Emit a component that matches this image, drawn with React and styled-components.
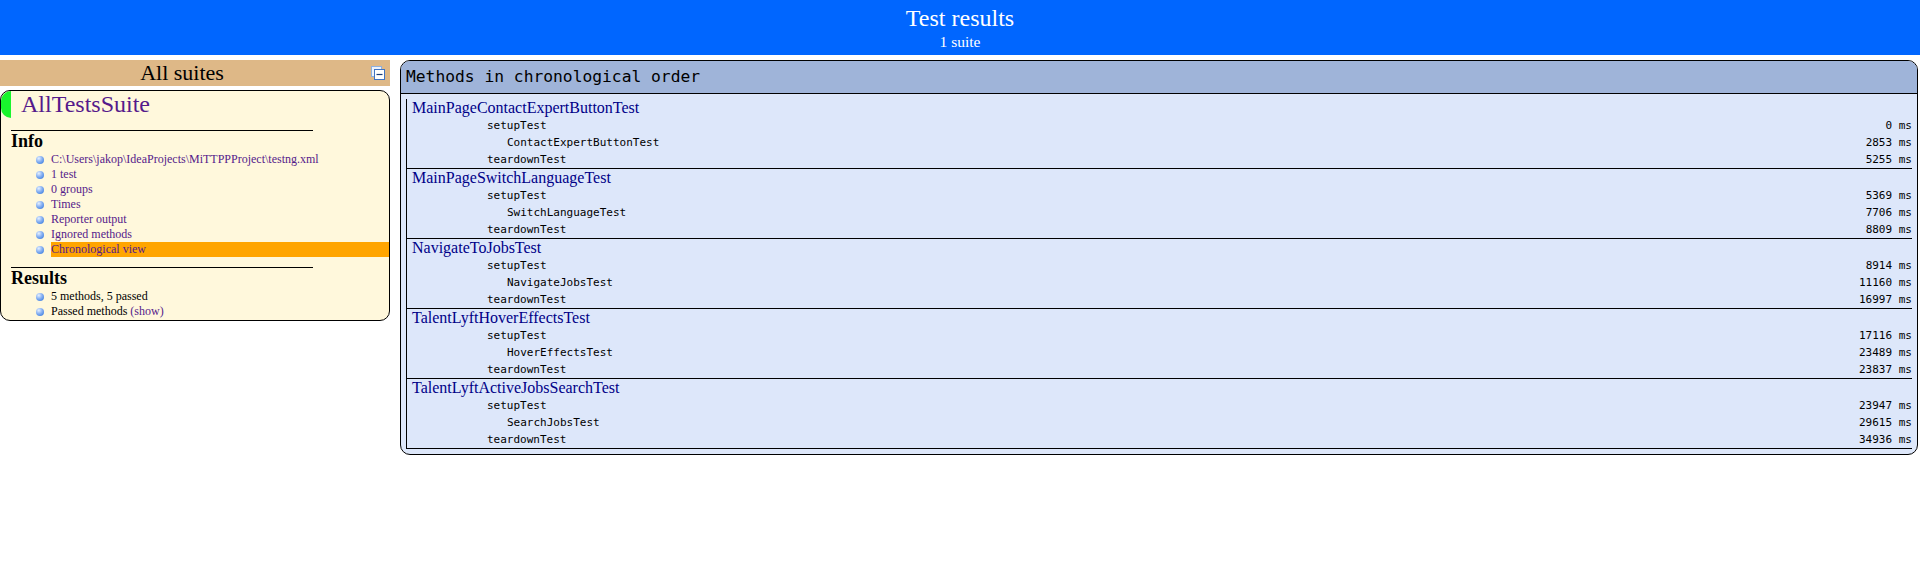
import React from "react";
import styled, { createGlobalStyle } from "styled-components";

const suite = {
  name: "AllTestsSuite",
  info: [
    { label: "C:\\Users\\jakop\\IdeaProjects\\MiTTPPProject\\testng.xml" },
    { label: "1 test" },
    { label: "0 groups" },
    { label: "Times" },
    { label: "Reporter output" },
    { label: "Ignored methods" },
    { label: "Chronological view", selected: true },
  ],
};

const chronology = [
  {
    name: "MainPageContactExpertButtonTest",
    methods: [
      { kind: "config", name: "setupTest", time: 0 },
      { kind: "test", name: "ContactExpertButtonTest", time: 2853 },
      { kind: "config", name: "teardownTest", time: 5255 },
    ],
  },
  {
    name: "MainPageSwitchLanguageTest",
    methods: [
      { kind: "config", name: "setupTest", time: 5369 },
      { kind: "test", name: "SwitchLanguageTest", time: 7706 },
      { kind: "config", name: "teardownTest", time: 8809 },
    ],
  },
  {
    name: "NavigateToJobsTest",
    methods: [
      { kind: "config", name: "setupTest", time: 8914 },
      { kind: "test", name: "NavigateJobsTest", time: 11160 },
      { kind: "config", name: "teardownTest", time: 16997 },
    ],
  },
  {
    name: "TalentLyftHoverEffectsTest",
    methods: [
      { kind: "config", name: "setupTest", time: 17116 },
      { kind: "test", name: "HoverEffectsTest", time: 23489 },
      { kind: "config", name: "teardownTest", time: 23837 },
    ],
  },
  {
    name: "TalentLyftActiveJobsSearchTest",
    methods: [
      { kind: "config", name: "setupTest", time: 23947 },
      { kind: "test", name: "SearchJobsTest", time: 29615 },
      { kind: "config", name: "teardownTest", time: 34936 },
    ],
  },
];

function CollapseIcon() {
  return (
    <svg width="14" height="14" viewBox="0 0 14 14">
      <rect x="0.5" y="0.5" width="10" height="10" fill="#eef3fb" stroke="#8fb0de" />
      <rect x="3.5" y="3.5" width="10" height="10" fill="#ffffff" stroke="#3f74c4" />
      <line x1="5.5" y1="8.5" x2="11.5" y2="8.5" stroke="#1c3d78" strokeWidth="1.2" />
    </svg>
  );
}

function App() {
  return (
    <>
      <GlobalStyle />
      <Banner>
        <BannerTitle>Test results</BannerTitle>
        <BannerSub>1 suite</BannerSub>
      </Banner>

      <Body>
        <Navigator>
          <SuitesHeader>
            All suites
            <CollapseButton>
              <CollapseIcon />
            </CollapseButton>
          </SuitesHeader>

          <SuiteBox>
            <SuiteName>{suite.name}</SuiteName>
            <SuiteContent>
              <SectionTitle>Info</SectionTitle>
              <ItemList>
                {suite.info.map((item) => (
                  <Item key={item.label}>
                    <Bullet />
                    <ItemText $selected={item.selected}>
                      <NavLink>{item.label}</NavLink>
                    </ItemText>
                  </Item>
                ))}
              </ItemList>

              <SectionTitle>Results</SectionTitle>
              <ItemList>
                <Item>
                  <Bullet />
                  <ItemText>5 methods, 5 passed</ItemText>
                </Item>
                <Item>
                  <Bullet />
                  <ItemText>
                    Passed methods <NavLink>(show)</NavLink>
                  </ItemText>
                </Item>
              </ItemList>
            </SuiteContent>
          </SuiteBox>
        </Navigator>

        <MainPanel>
          <PanelHeader>Methods in chronological order</PanelHeader>
          <PanelContent>
            {chronology.map((cls) => (
              <ClassBlock key={cls.name}>
                <ClassName>{cls.name}</ClassName>
                {cls.methods.map((m) => (
                  <MethodRow key={m.name} $test={m.kind === "test"}>
                    <span>{m.name}</span>
                    <MethodTime>{m.time} ms</MethodTime>
                  </MethodRow>
                ))}
              </ClassBlock>
            ))}
          </PanelContent>
        </MainPanel>
      </Body>
    </>
  );
}

const GlobalStyle = createGlobalStyle`
  html, body {
    margin: 0;
    padding: 0;
    background: #fff;
  }
  body {
    font-family: "Liberation Serif", "Times New Roman", serif;
    color: #000;
  }
`;

const Banner = styled.div`
  height: 45px;
  padding: 5px;
  background: #0066ff;
  color: #fff;
  text-align: center;
`;

const BannerTitle = styled.div`
  font-size: 24px;
  line-height: 27px;
`;

const BannerSub = styled.div`
  font-size: 15.5px;
  line-height: 19px;
`;

const Body = styled.div`
  display: flex;
  align-items: flex-start;
  margin-top: 5px;
`;

const Navigator = styled.div`
  flex: none;
  width: 400px;
`;

const SuitesHeader = styled.div`
  display: flex;
  align-items: center;
  justify-content: center;
  position: relative;
  margin: 0 10px 4px 0;
  padding-right: 26px;
  height: 26px;
  line-height: 26px;
  font-size: 22px;
  background: #deb887;
`;

const CollapseButton = styled.span`
  position: absolute;
  right: 5px;
  top: 6px;
  display: flex;
`;

const SuiteBox = styled.div`
  margin-right: 10px;
  padding-bottom: 1px;
  background: #fff8dc;
  border: 1px solid #000;
  border-radius: 10px;
`;

const SuiteName = styled.div`
  display: flex;
  align-items: center;
  height: 27px;
  padding-left: 10px;
  border-left: 10px solid #19f52d;
  border-radius: 10px 0 0 10px;
  font-size: 24px;
  color: #551a8b;
`;

const SuiteContent = styled.div`
  margin-left: 10px;
`;

const SectionTitle = styled.div`
  width: 80%;
  margin-top: 12px;
  border-top: 1px solid #000;
  font-size: 18px;
  font-weight: bold;
  line-height: 21px;

  ul + & {
    margin-top: 10px;
  }
`;

const ItemList = styled.ul`
  list-style: none;
  margin: 0;
  padding: 0;
`;

const Item = styled.li`
  display: flex;
  align-items: center;
  height: 15px;
  font-size: 12px;
  line-height: 15px;
`;

const Bullet = styled.span`
  flex: none;
  width: 8px;
  height: 8px;
  margin: 0 7px 0 25px;
  border-radius: 50%;
  background: radial-gradient(circle at 35% 30%, #e6f0ff 0%, #8fb6f4 40%, #3f7fe0 85%, #2f66c4 100%);
`;

const ItemText = styled.span`
  flex: 1;
  background: ${(p) => (p.$selected ? "#ffa500" : "transparent")};
`;

const NavLink = styled.span`
  color: #551a8b;
`;

const MainPanel = styled.div`
  flex: 1;
  margin-right: 2px;
  border: 1px solid #000;
  border-radius: 10px;
  overflow: hidden;
  background: #dde7fa;
`;

const PanelHeader = styled.div`
  padding: 5px;
  height: 22px;
  line-height: 22px;
  background: #9fb4d9;
  border-bottom: 1px solid #000;
  font-family: "DejaVu Sans Mono", "Liberation Mono", monospace;
  font-size: 16.3px;
  color: #000;
`;

const PanelContent = styled.div`
  padding: 5px;
`;

const ClassBlock = styled.div`
  border-left: 1px solid #000;
  border-bottom: 1px solid #000;
`;

const ClassName = styled.div`
  height: 18px;
  line-height: 18px;
  padding-left: 5px;
  font-size: 16px;
  color: #000088;
`;

const MethodRow = styled.div`
  display: flex;
  justify-content: space-between;
  height: 17px;
  line-height: 17px;
  padding-left: ${(p) => (p.$test ? "100px" : "80px")};
  font-family: "DejaVu Sans Mono", "Liberation Mono", monospace;
  font-size: 11px;
  color: #000;
`;

const MethodTime = styled.span`
  text-align: right;
`;

export default App;
